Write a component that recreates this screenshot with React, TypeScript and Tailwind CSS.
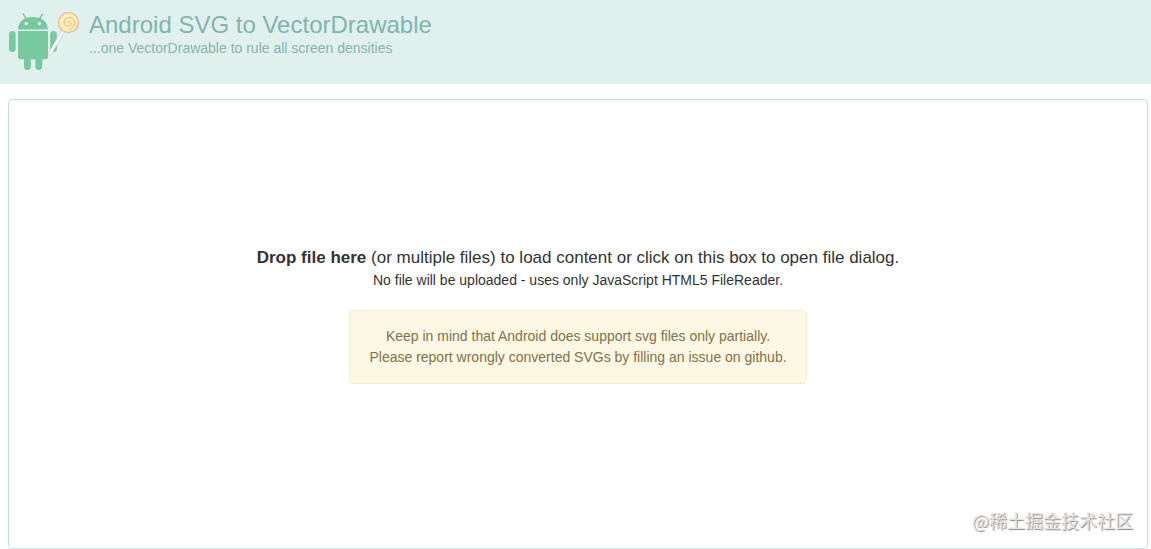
import { useRef } from 'react';

function Logo() {
  return (
    <svg viewBox="8 10 72 62" className="h-[62px] w-[72px] shrink-0" aria-hidden="true">
      <g fill="#78c8a0">
        <path d="M18 29.600C18 21.500 24.400 17 32.900 17s14.900 4.500 14.900 12.600z" />
        <path d="M18 31h30v25.500a2.700 2.700 0 0 1-2.700 2.700H20.700A2.700 2.700 0 0 1 18 56.500z" />
        <rect x="9" y="31" width="6.600" height="21" rx="3.300" />
        <rect x="50.200" y="31" width="6.600" height="21" rx="3.300" />
        <path d="M24 57h6.800v9.600a3.400 3.400 0 0 1-6.800 0zM35.400 57h6.800v9.600a3.400 3.400 0 0 1-6.800 0z" />
      </g>
      <path
        d="M23.200 14l3.200 4.800M42.600 14l-3.200 4.800"
        stroke="#78b8a0"
        strokeWidth="1.300"
        strokeLinecap="round"
      />
      <circle cx="26.200" cy="23.600" r="1.600" fill="#eef9f4" />
      <circle cx="39.400" cy="23.600" r="1.600" fill="#eef9f4" />
      <path d="M63.500 30.500L50 53.500" stroke="#b4c8c4" strokeWidth="3.600" strokeLinecap="round" />
      <path d="M63.500 30.500L50 53.500" stroke="#fbfdfd" strokeWidth="2.600" strokeLinecap="round" />
      <circle cx="68.500" cy="22.500" r="10" fill="#fff0b8" stroke="#f4a890" strokeWidth="1.100" />
      <path
        d="M68 22.800c-.4-1.700 2.300-2 2.900-.2.700 2.300-1.500 3.900-3.500 3.500-3.200-.6-4.200-4.300-2.300-6.700 2.600-3.200 8-2.200 9.300 1.700 1.200 3.900-1.300 7.400-5 8.300"
        fill="none"
        stroke="#f2ac84"
        strokeWidth="1"
        strokeLinecap="round"
      />
    </svg>
  );
}

function Header() {
  return (
    <header className="flex h-[84px] items-start gap-[9px] bg-[#dff0ed] px-2 pt-2.5">
      <Logo />
      <div className="text-[#82b4ae]">
        <h1 className="text-2xl leading-[30px]">Android SVG to VectorDrawable</h1>
        <p className="text-sm leading-4 text-[#8ab5ac]">
          ...one VectorDrawable to rule all screen densities
        </p>
      </div>
    </header>
  );
}

function DropZone() {
  const inputRef = useRef<HTMLInputElement>(null);

  return (
    <>
      <button
        type="button"
        onClick={() => inputRef.current?.click()}
        className="flex h-[450px] w-full cursor-pointer flex-col items-center justify-center rounded border border-[#bce4e8] text-[#333333]"
      >
        <span className="text-[17px] leading-6">
          <strong>Drop file here</strong> (or multiple files) to load content or click on this box to
          open file dialog.
        </span>
        <span className="text-sm leading-[21px]">
          No file will be uploaded - uses only JavaScript HTML5 FileReader.
        </span>
        <span className="my-[19px] rounded border border-[#f5eccb] bg-[#fcf8e3] px-[19px] py-[15px] text-sm leading-[21px] text-[#85704c]">
          Keep in mind that Android does support svg files only partially.
          <br />
          Please report wrongly converted SVGs by filling an issue on github.
        </span>
      </button>
      <input ref={inputRef} type="file" accept=".svg" multiple aria-label="SVG files" className="hidden" />
    </>
  );
}

function App() {
  return (
    <div className="bg-white font-['Liberation_Sans','Noto_Sans_CJK_SC',sans-serif]">
      <Header />
      <main className="relative pt-[15px] pr-[3px] pl-2">
        <DropZone />
        <span className="pointer-events-none absolute right-[18px] bottom-4 font-['Noto_Sans_CJK_SC',sans-serif] text-lg leading-[26px] text-[#e4e4e4] [text-shadow:1px_1px_1px_#888]">
          @稀土掘金技术社区
        </span>
      </main>
    </div>
  );
}

export default App;
